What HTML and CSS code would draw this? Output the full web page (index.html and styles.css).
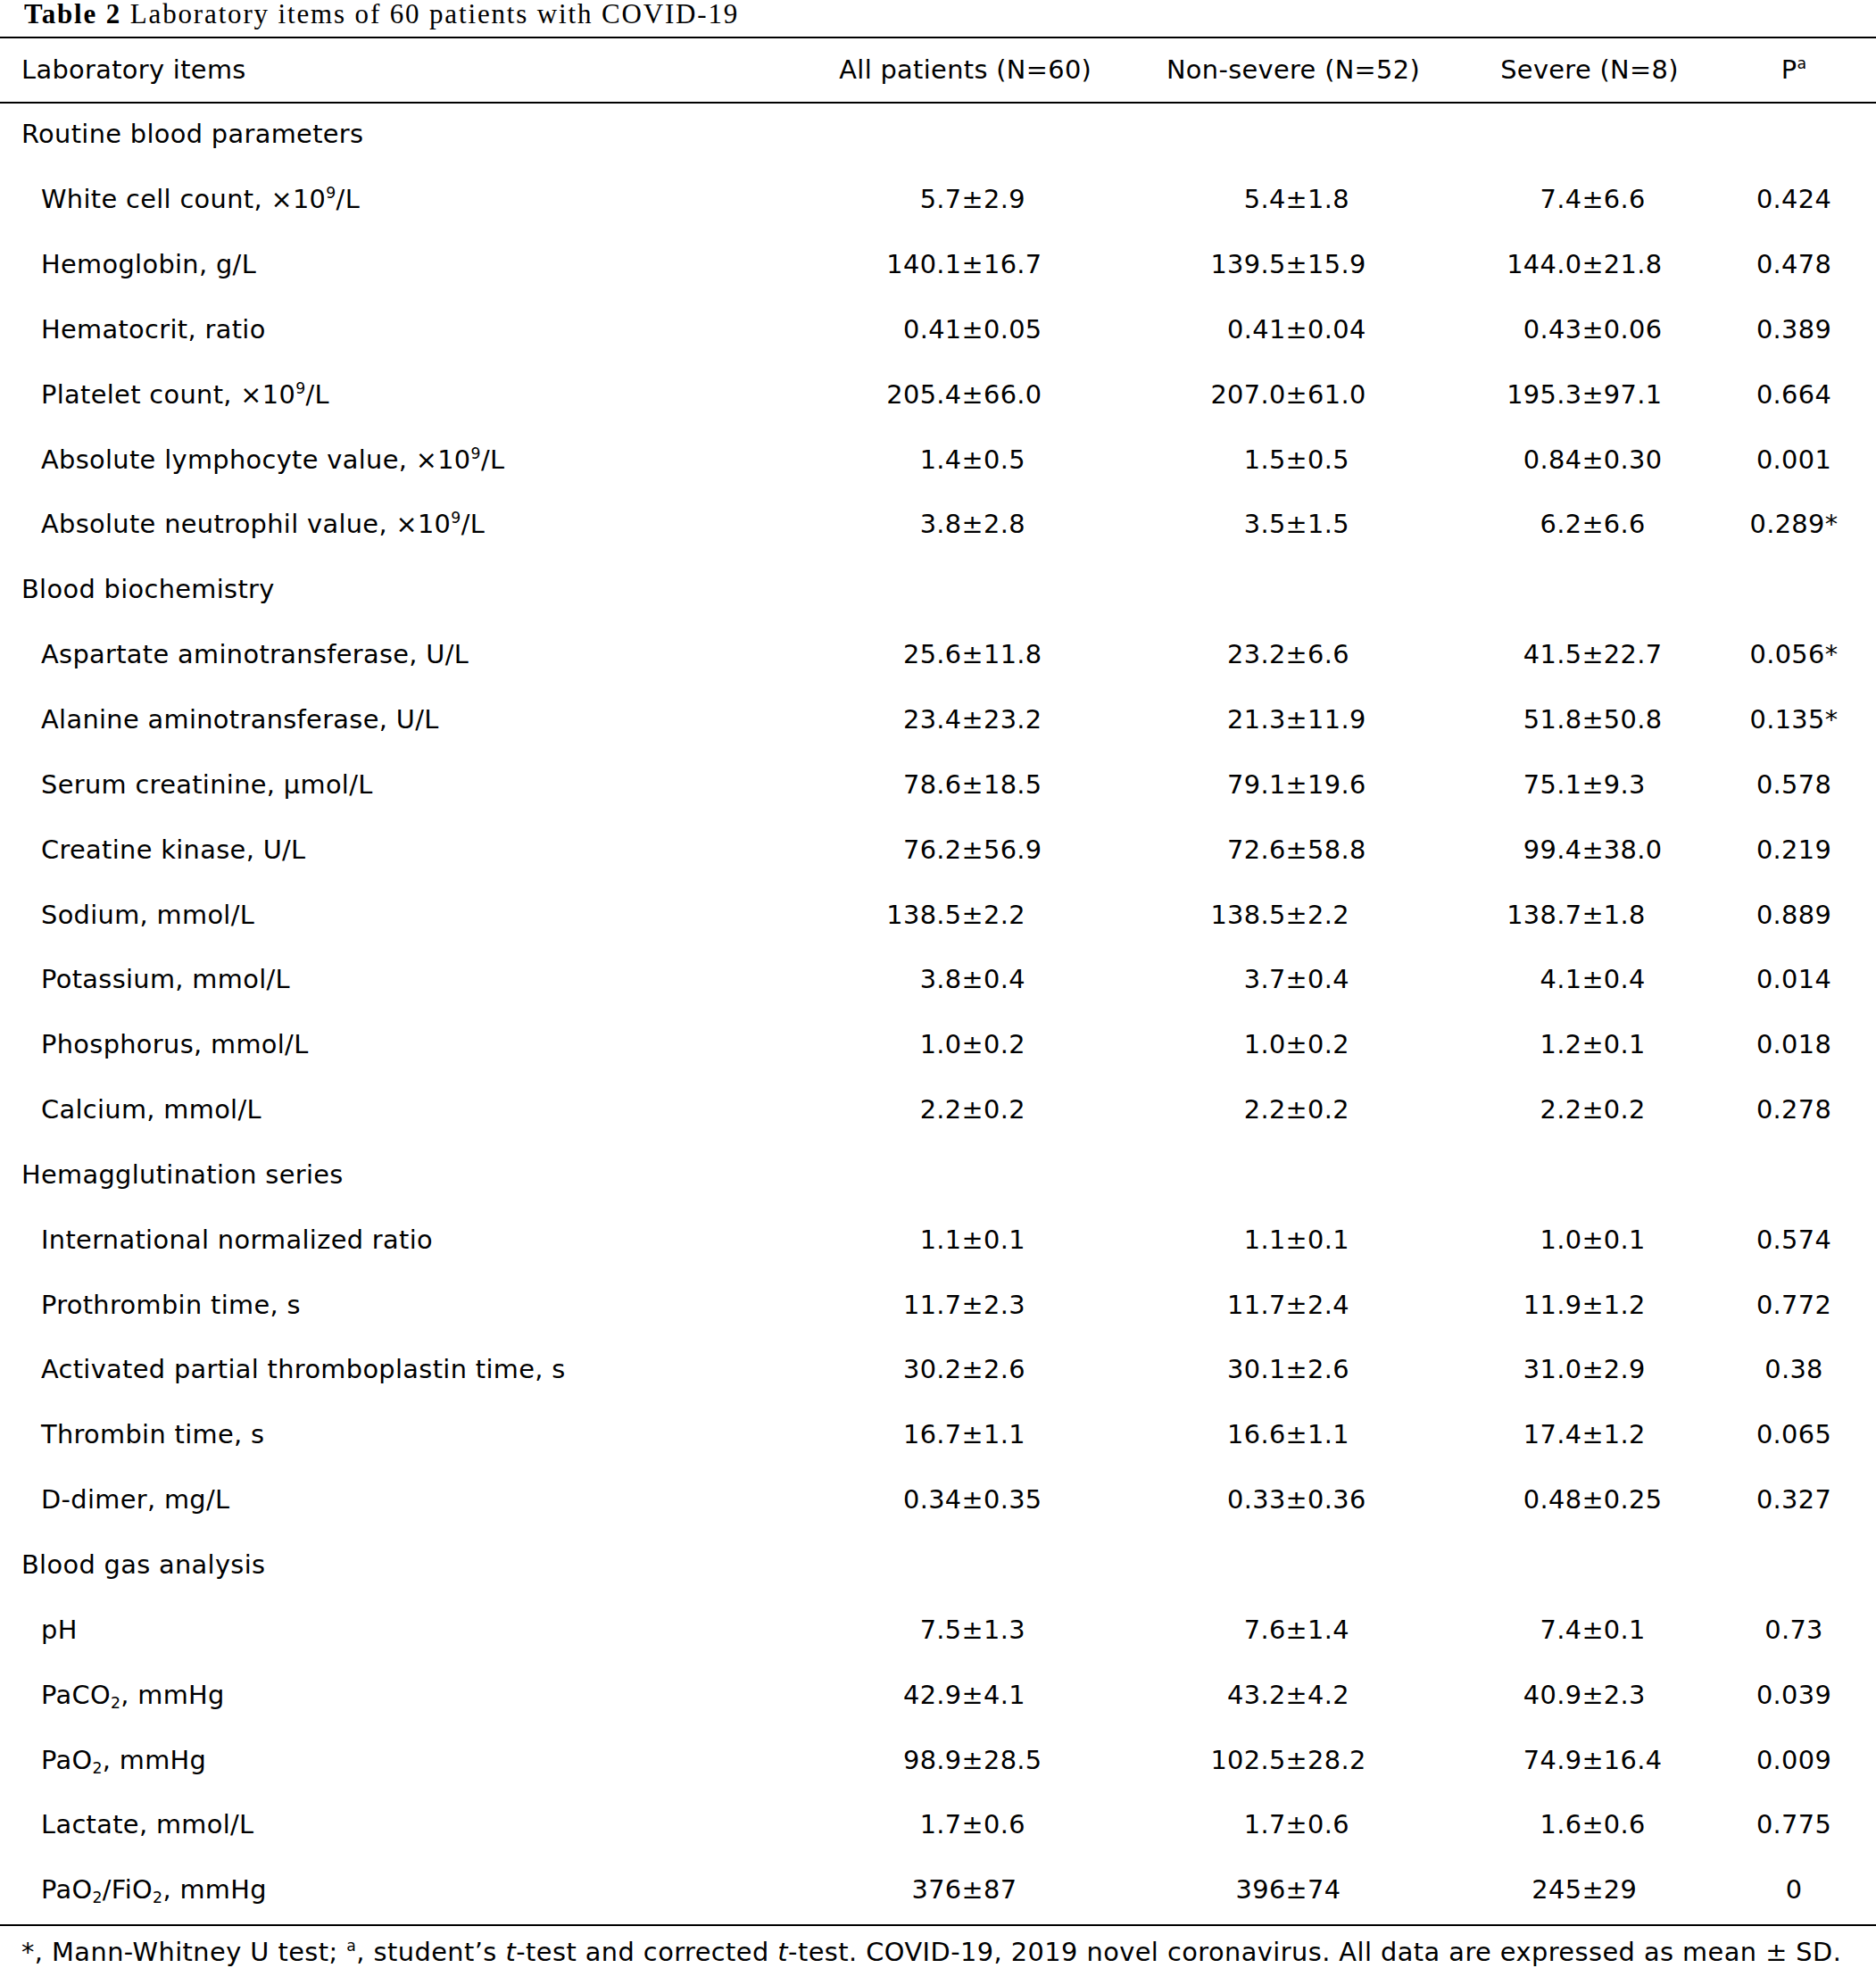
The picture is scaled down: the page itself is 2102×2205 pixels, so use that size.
FILE: index.html
```html
<!DOCTYPE html>
<html lang="en">
<head>
<meta charset="utf-8">
<title>Table 2</title>
<link rel="stylesheet" href="styles.css">
</head>
<body>
<div class="page">
  <div class="caption"><b>Table 2</b> Laboratory items of 60 patients with COVID-19</div>
  <div class="table">
    <div class="head">
      <div class="lab sec">Laboratory items</div>
      <div class="h">All patients (N=60)</div>
      <div class="h">Non-severe (N=52)</div>
      <div class="h">Severe (N=8)</div>
      <div class="h hp">P<sup>a</sup></div>
    </div>

    <div class="row"><div class="lab sec">Routine blood parameters</div></div>
    <div class="row"><div class="lab">White cell count, ×10<sup>9</sup>/L</div><span class="m">5.7</span><span class="s">±2.9</span><span class="m">5.4</span><span class="s">±1.8</span><span class="m">7.4</span><span class="s">±6.6</span><span class="p">0.424</span></div>
    <div class="row"><div class="lab">Hemoglobin, g/L</div><span class="m">140.1</span><span class="s">±16.7</span><span class="m">139.5</span><span class="s">±15.9</span><span class="m">144.0</span><span class="s">±21.8</span><span class="p">0.478</span></div>
    <div class="row"><div class="lab">Hematocrit, ratio</div><span class="m">0.41</span><span class="s">±0.05</span><span class="m">0.41</span><span class="s">±0.04</span><span class="m">0.43</span><span class="s">±0.06</span><span class="p">0.389</span></div>
    <div class="row"><div class="lab">Platelet count, ×10<sup>9</sup>/L</div><span class="m">205.4</span><span class="s">±66.0</span><span class="m">207.0</span><span class="s">±61.0</span><span class="m">195.3</span><span class="s">±97.1</span><span class="p">0.664</span></div>
    <div class="row"><div class="lab">Absolute lymphocyte value, ×10<sup>9</sup>/L</div><span class="m">1.4</span><span class="s">±0.5</span><span class="m">1.5</span><span class="s">±0.5</span><span class="m">0.84</span><span class="s">±0.30</span><span class="p">0.001</span></div>
    <div class="row"><div class="lab">Absolute neutrophil value, ×10<sup>9</sup>/L</div><span class="m">3.8</span><span class="s">±2.8</span><span class="m">3.5</span><span class="s">±1.5</span><span class="m">6.2</span><span class="s">±6.6</span><span class="p">0.289*</span></div>

    <div class="row"><div class="lab sec">Blood biochemistry</div></div>
    <div class="row"><div class="lab">Aspartate aminotransferase, U/L</div><span class="m">25.6</span><span class="s">±11.8</span><span class="m">23.2</span><span class="s">±6.6</span><span class="m">41.5</span><span class="s">±22.7</span><span class="p">0.056*</span></div>
    <div class="row"><div class="lab">Alanine aminotransferase, U/L</div><span class="m">23.4</span><span class="s">±23.2</span><span class="m">21.3</span><span class="s">±11.9</span><span class="m">51.8</span><span class="s">±50.8</span><span class="p">0.135*</span></div>
    <div class="row"><div class="lab">Serum creatinine, μmol/L</div><span class="m">78.6</span><span class="s">±18.5</span><span class="m">79.1</span><span class="s">±19.6</span><span class="m">75.1</span><span class="s">±9.3</span><span class="p">0.578</span></div>
    <div class="row"><div class="lab">Creatine kinase, U/L</div><span class="m">76.2</span><span class="s">±56.9</span><span class="m">72.6</span><span class="s">±58.8</span><span class="m">99.4</span><span class="s">±38.0</span><span class="p">0.219</span></div>
    <div class="row"><div class="lab">Sodium, mmol/L</div><span class="m">138.5</span><span class="s">±2.2</span><span class="m">138.5</span><span class="s">±2.2</span><span class="m">138.7</span><span class="s">±1.8</span><span class="p">0.889</span></div>
    <div class="row"><div class="lab">Potassium, mmol/L</div><span class="m">3.8</span><span class="s">±0.4</span><span class="m">3.7</span><span class="s">±0.4</span><span class="m">4.1</span><span class="s">±0.4</span><span class="p">0.014</span></div>
    <div class="row"><div class="lab">Phosphorus, mmol/L</div><span class="m">1.0</span><span class="s">±0.2</span><span class="m">1.0</span><span class="s">±0.2</span><span class="m">1.2</span><span class="s">±0.1</span><span class="p">0.018</span></div>
    <div class="row"><div class="lab">Calcium, mmol/L</div><span class="m">2.2</span><span class="s">±0.2</span><span class="m">2.2</span><span class="s">±0.2</span><span class="m">2.2</span><span class="s">±0.2</span><span class="p">0.278</span></div>

    <div class="row"><div class="lab sec">Hemagglutination series</div></div>
    <div class="row"><div class="lab">International normalized ratio</div><span class="m">1.1</span><span class="s">±0.1</span><span class="m">1.1</span><span class="s">±0.1</span><span class="m">1.0</span><span class="s">±0.1</span><span class="p">0.574</span></div>
    <div class="row"><div class="lab">Prothrombin time, s</div><span class="m">11.7</span><span class="s">±2.3</span><span class="m">11.7</span><span class="s">±2.4</span><span class="m">11.9</span><span class="s">±1.2</span><span class="p">0.772</span></div>
    <div class="row"><div class="lab">Activated partial thromboplastin time, s</div><span class="m">30.2</span><span class="s">±2.6</span><span class="m">30.1</span><span class="s">±2.6</span><span class="m">31.0</span><span class="s">±2.9</span><span class="p">0.38</span></div>
    <div class="row"><div class="lab">Thrombin time, s</div><span class="m">16.7</span><span class="s">±1.1</span><span class="m">16.6</span><span class="s">±1.1</span><span class="m">17.4</span><span class="s">±1.2</span><span class="p">0.065</span></div>
    <div class="row"><div class="lab">D-dimer, mg/L</div><span class="m">0.34</span><span class="s">±0.35</span><span class="m">0.33</span><span class="s">±0.36</span><span class="m">0.48</span><span class="s">±0.25</span><span class="p">0.327</span></div>

    <div class="row"><div class="lab sec">Blood gas analysis</div></div>
    <div class="row"><div class="lab">pH</div><span class="m">7.5</span><span class="s">±1.3</span><span class="m">7.6</span><span class="s">±1.4</span><span class="m">7.4</span><span class="s">±0.1</span><span class="p">0.73</span></div>
    <div class="row"><div class="lab">PaCO<sub>2</sub>, mmHg</div><span class="m">42.9</span><span class="s">±4.1</span><span class="m">43.2</span><span class="s">±4.2</span><span class="m">40.9</span><span class="s">±2.3</span><span class="p">0.039</span></div>
    <div class="row"><div class="lab">PaO<sub>2</sub>, mmHg</div><span class="m">98.9</span><span class="s">±28.5</span><span class="m">102.5</span><span class="s">±28.2</span><span class="m">74.9</span><span class="s">±16.4</span><span class="p">0.009</span></div>
    <div class="row"><div class="lab">Lactate, mmol/L</div><span class="m">1.7</span><span class="s">±0.6</span><span class="m">1.7</span><span class="s">±0.6</span><span class="m">1.6</span><span class="s">±0.6</span><span class="p">0.775</span></div>
    <div class="row last"><div class="lab">PaO<sub>2</sub>/FiO<sub>2</sub>, mmHg</div><span class="m">376</span><span class="s">±87</span><span class="m">396</span><span class="s">±74</span><span class="m">245</span><span class="s">±29</span><span class="p">0</span></div>
  </div>
  <div class="note">*, Mann-Whitney U test; <sup>a</sup>, student’s <i>t</i>-test and corrected <i>t</i>-test. COVID-19, 2019 novel coronavirus. All data are expressed as mean ± SD.</div>
</div>
</body>
</html>
```

FILE: styles.css
```css
html, body {
  margin: 0;
  padding: 0;
  background: #ffffff;
}

.page {
  width: 2102px;
  color: #000;
  font-family: "DejaVu Sans", "Liberation Sans", sans-serif;
  font-size: 28.8px;
  letter-spacing: 0.35px;
}

.caption {
  font-family: "Liberation Serif", "Times New Roman", serif;
  font-size: 31px;
  letter-spacing: 1.85px;
  line-height: 32px;
  height: 41px;
  padding-left: 27px;
  box-sizing: border-box;
  white-space: nowrap;
}

.caption b {
  font-weight: bold;
}

.table {
  border-top: 2px solid #000;
  border-bottom: 2px solid #000;
}

.head {
  display: grid;
  grid-template-columns: 940px 283.4px 451.2px 212.8px 1fr;
  align-items: center;
  height: 73px;
  box-sizing: border-box;
  padding-bottom: 2px;
  border-bottom: 2px solid #000;
  white-space: nowrap;
}

.head .h {
  text-align: center;
}

.head .hp {
  padding-left: 31px;
}

.row {
  display: grid;
  grid-template-columns: 940px 137.5px 222.5px 140.6px 199.4px 132.4px 145.6px 1fr;
  align-items: center;
  height: 72.85px;
  box-sizing: border-box;
  padding-bottom: 4px;
  white-space: nowrap;
}

.lab {
  padding-left: 46px;
}

.lab.sec {
  padding-left: 24px;
}

.m {
  text-align: right;
}

.s {
  text-align: left;
}

.p {
  text-align: center;
}

sup {
  font-size: 0.6em;
  line-height: 0;
  vertical-align: 0.62em;
}

sub {
  font-size: 0.6em;
  line-height: 0;
  vertical-align: -0.3em;
}

.note {
  padding-top: 9px;
  padding-left: 24px;
  line-height: 40px;
  letter-spacing: 0.45px;
  white-space: nowrap;
}

.note i {
  font-style: italic;
}
```
